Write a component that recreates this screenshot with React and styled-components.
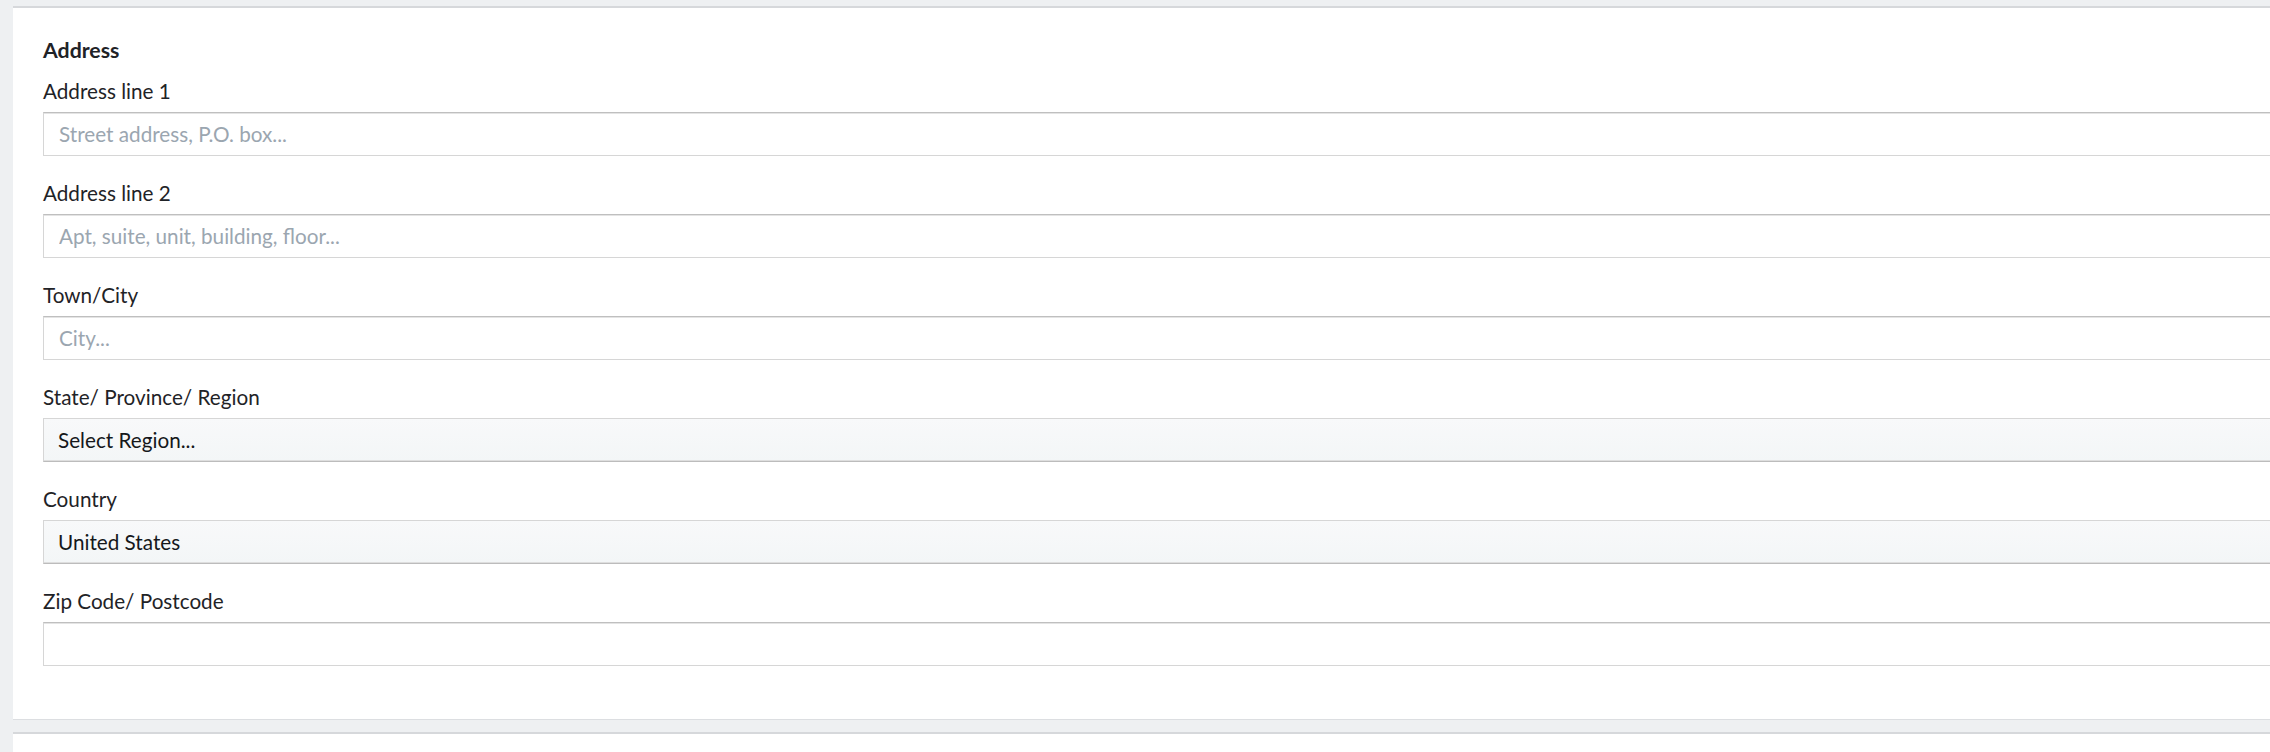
import React from "react";
import styled, { createGlobalStyle } from "styled-components";

const GlobalStyle = createGlobalStyle`
  html, body {
    margin: 0;
    padding: 0;
    overflow: hidden;
    background: #eef0f2;
  }
  body {
    font-family: Lato, "Open Sans", sans-serif;
    color: #1f2327;
  }
`;

const Page = styled.div`
  padding: 6px 0 0 13px;
`;

const Card = styled.section`
  background: #fff;
  border-top: 2px solid #d6d8db;
  border-bottom: 1px solid #dcdee1;
  margin-right: -60px;
  padding: 30px 30px 53px 30px;
  & + & {
    margin-top: 12px;
  }
`;

const Heading = styled.h3`
  margin: 0 0 16px;
  font-size: 21.3px;
  line-height: 24px;
  font-weight: 700;
  color: #1f2327;
`;

const Field = styled.div`
  display: flex;
  flex-direction: column;
  gap: 8px;
  margin-bottom: 24px;
  &:last-child {
    margin-bottom: 0;
  }
`;

const Label = styled.label`
  font-size: 20.7px;
  line-height: 26px;
  color: #1f2327;
`;

const TextInput = styled.input`
  box-sizing: border-box;
  width: 100%;
  height: 44px;
  margin: 0;
  padding: 0 15px;
  border: 1px solid #d6d6d6;
  border-top-color: #bfbfbf;
  box-shadow: inset 0 1px 0 #e4e4e4;
  border-radius: 0;
  background: #fff;
  font-family: Lato, "Open Sans", sans-serif;
  font-size: 20.7px;
  color: #1f2327;
  outline: none;
  &::placeholder {
    color: #9ba6b0;
  }
`;

const Select = styled.select`
  box-sizing: border-box;
  width: 100%;
  height: 44px;
  margin: 0;
  padding: 0 14px;
  appearance: none;
  border: 1px solid #d6d6d6;
  border-bottom-color: #bcbcbc;
  box-shadow: inset 0 -1px 0 #dedede;
  border-radius: 0;
  background: linear-gradient(#f8f9fa, #f3f6f7);
  font-family: Lato, "Open Sans", sans-serif;
  font-size: 20.7px;
  color: #15181b;
  outline: none;
`;

const fields = [
  { label: "Address line 1", placeholder: "Street address, P.O. box..." },
  { label: "Address line 2", placeholder: "Apt, suite, unit, building, floor..." },
  { label: "Town/City", placeholder: "City..." },
  { label: "State/ Province/ Region", options: ["Select Region..."] },
  { label: "Country", options: ["United States"] },
  { label: "Zip Code/ Postcode", placeholder: "" },
];

export default function App() {
  return (
    <>
      <GlobalStyle />
      <Page>
        <Card>
          <Heading>Address</Heading>
          {fields.map((f, i) => (
            <Field key={i}>
              <Label htmlFor={`f${i}`}>{f.label}</Label>
              {f.options ? (
                <Select id={`f${i}`} defaultValue={f.options[0]}>
                  {f.options.map((o) => (
                    <option key={o}>{o}</option>
                  ))}
                </Select>
              ) : (
                <TextInput id={`f${i}`} placeholder={f.placeholder} />
              )}
            </Field>
          ))}
        </Card>
        <Card style={{ height: 200 }} />
      </Page>
    </>
  );
}
